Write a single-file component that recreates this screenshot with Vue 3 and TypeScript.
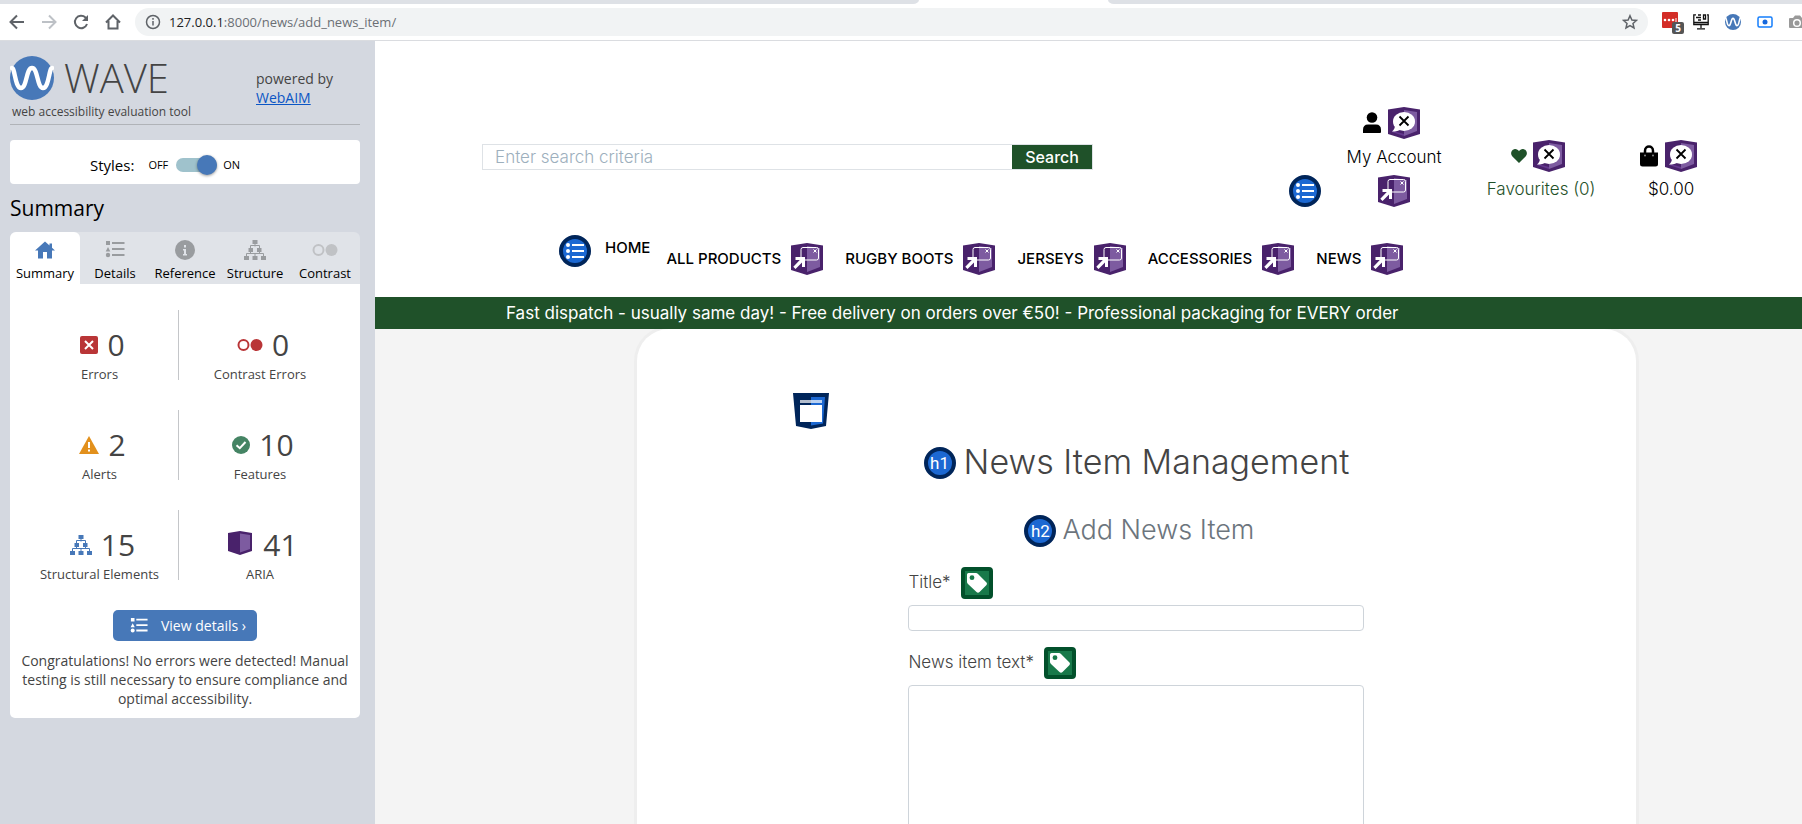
<script setup lang="ts">
import { ref } from 'vue'

interface Tab { id: string; label: string; icon: string; w: number; h: number }
interface Stat { label: string; count: number; icon: string; w: number; h: number; cls: string }

const tabs: Tab[] = [
  { id: 'summary', label: 'Summary', icon: 'i-house', w: 20, h: 20 },
  { id: 'details', label: 'Details', icon: 'i-list', w: 20, h: 20 },
  { id: 'reference', label: 'Reference', icon: 'i-info', w: 20, h: 20 },
  { id: 'structure', label: 'Structure', icon: 'i-tree', w: 22, h: 20 },
  { id: 'contrast', label: 'Contrast', icon: 'i-contrast', w: 26, h: 20 },
]
const activeTab = ref('summary')

const rows: Stat[][] = [
  [
    { label: 'Errors', count: 0, icon: 'i-error', w: 18, h: 18, cls: 'red' },
    { label: 'Contrast Errors', count: 0, icon: 'i-contrast', w: 26, h: 20, cls: 'red' },
  ],
  [
    { label: 'Alerts', count: 2, icon: 'i-alert', w: 20, h: 18, cls: 'amber' },
    { label: 'Features', count: 10, icon: 'i-check', w: 18, h: 18, cls: 'green' },
  ],
  [
    { label: 'Structural Elements', count: 15, icon: 'i-tree', w: 22, h: 20, cls: 'blue' },
    { label: 'ARIA', count: 41, icon: 'i-aria', w: 24, h: 24, cls: 'aria' },
  ],
]

const menus: string[] = ['ALL PRODUCTS', 'RUGBY BOOTS', 'JERSEYS', 'ACCESSORIES', 'NEWS']
const stylesOn = ref(true)
const query = ref('')
const title = ref('')
const body = ref('')
</script>

<template>
  <div class="browser">
    <svg class="defs" aria-hidden="true">
      <symbol id="i-logo" viewBox="0 0 44 44">
        <circle cx="22" cy="22" r="22" fill="#4778b8" />
        <path d="M2 12C5 12 5 32 11 32C17 32 16 12 22 12C28 12 27 32 33 32C39 32 39 12 42 12" fill="none" stroke="#fff" stroke-width="4.4" stroke-linecap="round" />
      </symbol>
      <symbol id="i-house" viewBox="0 0 20 20"><path fill="currentColor" d="M10 1.5L0 10.5H3V18.5H8V12H12V18.5H17V10.5H20L17 7.8V3.5H14.5V5.5Z" /></symbol>
      <symbol id="i-list" viewBox="0 0 20 20">
        <path fill="currentColor" d="M1 1H5V5H1ZM3 7L5.3 11.5H.7ZM7 2H19.5V4H7ZM7 8H19.5V10H7ZM7 14H19.5V16H7Z" /><circle cx="3" cy="15" r="2.2" fill="currentColor" />
      </symbol>
      <symbol id="i-info" viewBox="0 0 20 20"><circle cx="10" cy="10" r="10" fill="currentColor" /><path fill="#e0e3e8" d="M9 5H11V7.4H9ZM8 9H11V14H12V15.500H8V14H9V10.500H8Z" /></symbol>
      <symbol id="i-tree" viewBox="0 0 22 20">
        <path fill="currentColor" d="M8.5 0H13.5V4H8.5ZM4.500 8H9V12H4.500ZM13 8H17.500V12H13ZM0 16H5V20H0ZM8.500 16H13.500V20H8.500ZM17 16H22V20H17Z" />
        <path fill="none" stroke="currentColor" d="M11 4V6.500M6.500 8.500V5.500H15.500V8.500M2.500 16V13.500H19.500V16M11 16V13.500M6.500 12V13.500M15.500 12V13.500" />
      </symbol>
      <symbol id="i-contrast" viewBox="0 0 26 20"><circle cx="6.500" cy="10" r="5" fill="none" stroke="currentColor" stroke-width="2" /><circle cx="19.500" cy="10" r="6" fill="currentColor" /></symbol>
      <symbol id="i-error" viewBox="0 0 18 18"><rect width="18" height="18" rx="2" fill="currentColor" /><path d="M5 5L13 13M13 5L5 13" stroke="#fff" stroke-width="2" /></symbol>
      <symbol id="i-alert" viewBox="0 0 20 18"><path fill="currentColor" d="M10 0L20 18H0Z" /><path fill="#fff" d="M9 6H11V12H9ZM9 13.500H11V15.500H9Z" /></symbol>
      <symbol id="i-check" viewBox="0 0 18 18"><circle cx="9" cy="9" r="9" fill="currentColor" /><path d="M4.500 9.200L7.800 12.200L13.500 6" fill="none" stroke="#fff" stroke-width="2" /></symbol>
      <symbol id="i-aria" viewBox="0 0 24 24">
        <path fill="#49226b" d="M0 2L12 0L24 2V20L12 24L0 20Z" /><path fill="#7d5ba0" d="M12 2.500L22 4V18L12 21.500Z" />
      </symbol>
      <symbol id="b-hidden" viewBox="0 0 32 32">
        <path fill="#49226b" d="M0 2.500L16 0L32 2.500V27L16 32L0 27Z" /><path fill="#7d5ba0" d="M16 3L29 5V24L16 29Z" />
        <path fill="#65388f" d="M5 24L16 27V29L4 25Z" />
        <ellipse cx="16" cy="14.500" rx="11" ry="9.500" fill="#fff" /><path fill="#fff" d="M7 18C7 21 6 23 4 24.500C8 24.500 11 24 13 22Z" />
        <path d="M11.500 9.500L20.500 18.500M20.500 9.500L11.500 18.500" stroke="#000" stroke-width="1.800" />
      </symbol>
      <symbol id="b-popup" viewBox="0 0 32 32">
        <path fill="#49226b" d="M0 2.500L16 0L32 2.500V27L16 32L0 27Z" /><path fill="#7d5ba0" d="M16 3L29 5V24L16 29Z" />
        <rect x="10" y="4.500" width="17.500" height="12.500" rx="2" fill="none" stroke="#fff" stroke-width="1" />
        <path d="M22.500 6.500L25.500 9.500M25.500 6.500L22.500 9.500" stroke="#fff" />
        <path fill="#fff" d="M4.500 14H14V24H11V19.500L4.500 26L2.300 23.800L8.800 17H4.500Z" />
      </symbol>
      <symbol id="b-list" viewBox="0 0 32 32">
        <circle cx="16" cy="16" r="14" fill="#1c68d2" stroke="#00255a" stroke-width="4" />
        <g fill="#fff"><circle cx="9" cy="10" r="2" /><circle cx="9" cy="16" r="2" /><circle cx="9" cy="22" r="2" /><path d="M13 9H25V11H13ZM13 15H25V17H13ZM13 21H25V23H13Z" /></g>
      </symbol>
      <symbol id="b-region" viewBox="0 0 36 36">
        <path fill="#00255a" d="M0 0H36L33 33L18 36L3 33Z" /><path fill="#1c68d2" d="M18 4H32L30 30.500L18 32.500Z" />
        <path fill="#b3bdcd" d="M7 7H18V10H7Z" /><path fill="#bad1f1" d="M18 7H29V10H18Z" /><path fill="#fff" d="M7 12H29V29H7Z" />
      </symbol>
      <symbol id="b-label" viewBox="0 0 32 32">
        <rect x="2" y="2" width="28" height="28" rx="2" fill="#18794a" stroke="#02502b" stroke-width="4" />
        <path fill="#fff" d="M7.500 6H15Q16 6 17 7L25.500 15.500Q26.500 16.800 25.500 18L18.500 25Q17 26.500 15.500 25L7 17Q6 16 6 15V7.500Q6 6 7.500 6Z" /><circle cx="11" cy="10.700" r="2.400" fill="#18794a" />
      </symbol>
    </svg>

    <header class="chrome">
      <div class="strip"><div class="strip-side left"></div><div class="strip-side right"></div></div>
      <div class="toolbar">
        <div class="nav-buttons">
          <button aria-label="Back"><svg width="16" height="16" viewBox="0 0 16 16"><path d="M15 8H2M8 1.500L1.500 8L8 14.500" /></svg></button>
          <button aria-label="Forward" class="dim"><svg width="16" height="16" viewBox="0 0 16 16"><path d="M1 8H14M8 1.500L14.500 8L8 14.500" /></svg></button>
          <button aria-label="Reload"><svg width="16" height="16" viewBox="0 0 16 16"><path d="M14 10A6.200 6.200 0 1 1 12.500 3.500L14 5" /><path class="solid" d="M15 1V7H9Z" /></svg></button>
          <button aria-label="Home"><svg width="16" height="16" viewBox="0 0 16 16"><path d="M1 8.500L8 1.500L15 8.500M3.500 7V14.500H12.500V7" /></svg></button>
        </div>
        <div class="address">
          <svg width="16" height="16" viewBox="0 0 16 16" class="line"><circle cx="8" cy="8" r="6.500" /><path d="M8 7V11.500M8 4V5.700" /></svg>
          <span class="url"><span class="host">127.0.0.1</span>:8000/news/add_news_item/</span>
          <button aria-label="Bookmark"><svg width="16" height="16" viewBox="0 0 16 16"><path class="thin" d="M8 1.700L9.900 6L14.500 6.400L11 9.500L12 14L8 11.600L4 14L5 9.500L1.500 6.400L6.100 6Z" /></svg></button>
        </div>
        <div class="extensions">
          <svg width="24" height="24" viewBox="0 0 24 24">
            <rect x="1" y="2" width="16" height="16" rx="1" fill="#d32d27" /><g fill="#fff"><circle cx="4" cy="10" r="1.300" /><circle cx="8" cy="10" r="1.300" /><circle cx="12" cy="10" r="1.300" /><rect x="14.500" y="8" width="1" height="4" /></g>
            <rect x="11" y="12" width="12" height="12" rx="2" fill="#555" /><text x="17" y="22" class="count">5</text>
          </svg>
          <svg width="16" height="16" viewBox="0 0 16 16" class="monitor"><path d="M3 .8H.8V10.500H15.200V.8H14M1 8.500H15M8 10.500V14M4 14.800H12M5 1H8M3 3.500H8M5 6H8M10.500 1V5H12.500V1Z" /></svg>
          <svg width="16" height="16"><use href="#i-logo" /></svg>
          <svg width="16" height="16" viewBox="0 0 16 16"><rect x="1" y="3" width="14" height="10" rx="1.500" fill="#fff" stroke="#157efb" stroke-width="1.500" /><circle cx="8" cy="8" r="2.500" fill="#1768dc" /></svg>
          <svg width="16" height="16" viewBox="0 0 16 16"><path fill="#999" d="M1 4H4L6 1.500H11L13 4H16V14H1Q0 14 0 13V5Q0 4 1 4Z" /><circle cx="8" cy="9" r="3.300" fill="#999" stroke="#fff" stroke-width="1.500" /></svg>
        </div>
      </div>
    </header>

    <div class="workspace">
      <aside class="wave">
        <div class="brand">
          <div class="brand-main">
            <div class="brand-name"><svg width="44" height="44"><use href="#i-logo" /></svg><span>WAVE</span></div>
            <p>web accessibility evaluation tool</p>
          </div>
          <div class="powered">powered by<br /><a href="#">WebAIM</a></div>
        </div>

        <div class="styles-box">
          <label for="styles" class="styles-label">Styles:</label>
          <span>OFF</span><input id="styles" v-model="stylesOn" type="checkbox" class="switch" /><span>ON</span>
        </div>

        <h2>Summary</h2>
        <div class="tabs">
          <button v-for="t in tabs" :key="t.id" :class="['tab', t.id, { active: activeTab === t.id }]" @click="activeTab = t.id">
            <svg :width="t.w" :height="t.h"><use :href="'#' + t.icon" /></svg>{{ t.label }}
          </button>
        </div>
        <section class="panel">
          <div v-for="(row, i) in rows" :key="i" class="stat-row">
            <div v-for="s in row" :key="s.label" class="stat">
              <div class="figure"><svg :class="s.cls" :width="s.w" :height="s.h"><use :href="'#' + s.icon" /></svg>{{ s.count }}</div>
              <div class="caption">{{ s.label }}</div>
            </div>
          </div>
          <button class="view"><svg width="20" height="18"><use href="#i-list" /></svg>View details ›</button>
          <p class="message">Congratulations! No errors were detected! Manual testing is still necessary to ensure compliance and optimal accessibility.</p>
        </section>
      </aside>

      <main class="page">
        <div class="shop-head">
          <div class="shop-top">
            <form class="search" @submit.prevent>
              <input v-model="query" type="text" aria-label="Search" placeholder="Enter search criteria" />
              <button>Search</button>
            </form>
            <div class="account">
              <svg class="badge list-badge"><use href="#b-list" /></svg>
              <div class="acct user">
                <a href="#">
                  <span class="icons"><svg width="20" height="22" viewBox="0 0 20 22"><circle cx="10" cy="5.500" r="5.300" /><path d="M1 21V18Q1 12.500 6 12.500H14Q19 12.500 19 18V20Q19 21 18 21Z" /></svg><svg class="badge"><use href="#b-hidden" /></svg></span>
                  <span class="acct-label">My Account</span>
                </a>
                <svg class="badge"><use href="#b-popup" /></svg>
              </div>
              <a href="#" class="acct fav">
                <span class="icons"><svg width="16" height="16" viewBox="0 0 16 16"><path d="M8 15L1.200 8.200C-1 5.500 .3 2 3.200 1.200C5.300 .7 7 1.800 8 3.300C9 1.800 10.700 .7 12.800 1.200C15.700 2 17 5.500 14.800 8.200Z" /></svg><svg class="badge"><use href="#b-hidden" /></svg></span>
                <span class="acct-label">Favourites (0)</span>
              </a>
              <a href="#" class="acct bag">
                <span class="icons"><svg width="20" height="22" viewBox="0 0 20 22"><path d="M1 7.500H19V19Q19 21.500 16.500 21.500H3.500Q1 21.500 1 19Z" /><path d="M6 11V6C6 0 14 0 14 6V11" fill="none" stroke="#000" stroke-width="2.500" /><circle cx="6" cy="10.500" r="1" fill="#888" /><circle cx="14" cy="10.500" r="1" fill="#888" /></svg><svg class="badge"><use href="#b-hidden" /></svg></span>
                <span class="acct-label">$0.00</span>
              </a>
            </div>
          </div>
          <nav>
            <svg class="badge"><use href="#b-list" /></svg>
            <a href="#" class="home">HOME</a>
            <div class="menus">
              <a v-for="m in menus" :key="m" href="#">{{ m }}<svg class="badge"><use href="#b-popup" /></svg></a>
            </div>
          </nav>
        </div>
        <div class="banner">Fast dispatch - usually same day! - Free delivery on orders over €50! - Professional packaging for EVERY order</div>

        <div class="card">
          <svg class="region"><use href="#b-region" /></svg>
          <h1><span class="hbadge">h1</span>News Item Management</h1>
          <h2><span class="hbadge">h2</span>Add News Item</h2>
          <form class="fields" @submit.prevent>
            <div class="field-head"><label for="title">Title*</label><svg class="badge"><use href="#b-label" /></svg></div>
            <input id="title" v-model="title" type="text" />
            <div class="field-head"><label for="body">News item text*</label><svg class="badge"><use href="#b-label" /></svg></div>
            <textarea id="body" v-model="body" rows="10"></textarea>
          </form>
        </div>
      </main>
    </div>
  </div>
</template>

<style>
body { margin: 0; }
</style>

<style scoped>
* { box-sizing: border-box; }
button, input, textarea { font: inherit; color: inherit; margin: 0; }
button { border: 0; background: none; padding: 0; cursor: pointer; }
svg { display: block; flex: none; }
h1, h2, p { margin: 0; font-weight: 400; }
.defs { position: absolute; width: 0; height: 0; }
.browser { height: 100vh; display: flex; flex-direction: column; overflow: hidden; font-family: "Open Sans", sans-serif; }

.chrome { flex: none; background: #fff; border-bottom: 1px solid #dadce0; }
.strip { height: 4px; display: flex; justify-content: space-between; }
.strip-side { background: #dee1e6; }
.strip-side.left { width: 51%; border-bottom-right-radius: 6px 4px; }
.strip-side.right { width: 38.500%; border-bottom-left-radius: 6px 4px; }
.toolbar { height: 36px; display: flex; align-items: center; }
.nav-buttons { display: flex; gap: 16px; padding: 0 14px 0 9px; }
.toolbar svg { fill: none; stroke: none; }
.toolbar button path, .line circle, .line path { stroke: #5f6368; stroke-width: 2; fill: none; }
.toolbar button.dim path { stroke: #bdc1c6; }
.toolbar .line circle, .toolbar .line path { stroke-width: 1.500; }
.toolbar button .solid { fill: #5f6368; stroke: none; }
.toolbar button .thin { stroke-width: 1.500; }
.address { flex: 1; height: 28px; border-radius: 14px; background: #f1f3f4; display: flex; align-items: center; padding: 0 10px; color: #6b6f74; font-size: 13px; }
.url { flex: 1; margin-left: 8px; }
.host { color: #202124; }
.extensions { display: flex; align-items: center; gap: 16px; padding-left: 13px; margin-right: -3px; }
.extensions svg:first-child { margin-right: -8px; }
.count { fill: #fff; font-size: 10px; font-weight: 700; text-anchor: middle; }
.monitor path { stroke: #111; stroke-width: 1.300; }

.workspace { flex: 1; display: flex; min-height: 0; }
.wave { flex: none; width: 375px; background: #d4d8e0; padding: 15px 15px 0 10px; color: #444; }
.brand { display: flex; border-bottom: 1px solid #b0b3b8; height: 69px; }
.brand-main { width: 246px; }
.brand-name { display: flex; align-items: center; gap: 10px; height: 44px; font-size: 40px; font-weight: 300; line-height: 44px; }
.brand-main p { font-size: 12px; line-height: 24px; padding-left: 2px; }
.powered { padding-top: 13px; font-size: 14px; line-height: 19px; }
.powered a { color: #0b56c5; }
.styles-box { margin-top: 15px; height: 44px; border-radius: 4px; background: #fff; color: #000; display: flex; align-items: center; padding: 5px 0 0 80px; font-size: 11px; }
.styles-label { font-size: 15px; margin-right: 14px; }
.switch { appearance: none; width: 41px; height: 14px; border-radius: 7px; margin: 0 6px 0 8px; background: #9fc2cc; display: flex; align-items: center; }
.switch::before { content: ""; width: 20px; height: 20px; border-radius: 50%; background: #4778b8; box-shadow: 0 1px 3px #0006; flex: none; }
.switch:checked::before { margin-left: auto; }
.wave h2 { font-size: 21px; line-height: 48px; color: #000; }
.tabs { display: flex; background: #e0e3e8; border-radius: 6px 6px 0 0; }
.tab { flex: 1; min-width: 0; height: 52px; display: flex; flex-direction: column; align-items: center; gap: 4px; padding-top: 8px; font-size: 13px; line-height: 18px; color: #000; border-radius: 6px 6px 0 0; }
.tab.active { background: #fff; }
.tab svg { color: #999c9f; }
.tab.active svg { color: #4778b8; }
.tab.contrast svg { color: #c0c2c5; }
.panel { background: #fff; border-radius: 0 0 5px 5px; padding: 26px 10px 10px; display: flex; flex-direction: column; align-items: center; }
.stat-row { display: flex; align-self: stretch; justify-content: center; height: 70px; margin: 0 8px 30px 0; }
.stat { width: 158px; padding-top: 19px; text-align: center; }
.stat:first-child { border-right: 1px solid #c4c6c9; }
.stat:last-child { width: 162px; }
.figure { display: flex; justify-content: center; align-items: center; gap: 9px; height: 32px; padding-left: 6px; font-size: 30px; line-height: 32px; }
.caption { font-size: 13px; line-height: 26px; }
.red { color: #b93537; } .amber { color: #e2901c; } .green { color: #458464; } .blue { color: #4778b8; } .aria { margin: 0 2px 4px 0; }
.view { height: 31px; padding: 0 11px 0 16px; border-radius: 5px; background: #4778b8; color: #fff; display: flex; align-items: center; gap: 12px; font-size: 14px; }
.message { padding-top: 10px; font-size: 14px; line-height: 19px; text-align: center; }

.page { flex: 1; min-width: 0; background: #f4f4f4; font-family: Inter, sans-serif; font-size: 17px; font-weight: 300; color: #000; }
.page a { color: inherit; text-decoration: none; }
.badge { width: 32px; height: 32px; }
.shop-head { background: #fff; height: 256px; padding-top: 66px; }
.shop-top { display: flex; justify-content: space-between; height: 100px; padding: 0 7% 0 7.500%; }
.search { width: 611px; height: 26px; margin-top: 37px; display: flex; border: 1px solid #dee2e6; }
.search input { flex: 1; min-width: 0; border: 0; outline: 0; padding: 0 12px; background: none; }
.search input::placeholder { color: #9dafbd; opacity: 1; }
.search button { width: 80px; background: #1f5129; color: #fff; font-size: 16px; font-weight: 500; }
.account { display: flex; }
.list-badge { margin-top: 68px; }
.acct { display: flex; flex-direction: column; align-items: center; }
.icons { display: flex; align-items: center; justify-content: center; gap: 6px; padding-right: 6px; }
.acct-label { display: block; line-height: 34px; }
.user { width: 110px; margin-left: 18px; }
.user .acct-label { line-height: 36px; }
.fav { width: 112px; margin: 33px 0 0 36px; }
.fav svg:first-child { fill: #1f5129; }
.page .fav { color: #1f5129; }
.bag { width: 62px; margin: 33px 0 0 43px; }
nav { display: flex; padding: 28px 0 0 184px; font-weight: 500; font-size: 15px; white-space: nowrap; }
.home { margin: 0 16px 0 14px; line-height: 26px; }
.menus { display: flex; gap: 22px; padding-top: 8px; }
.menus a { display: flex; align-items: center; gap: 10px; line-height: 28px; }
.banner { background: #1f5129; color: #fff; line-height: 32px; padding-left: 131px; font-weight: 400; white-space: nowrap; }
.card { width: 70%; margin-left: 262px; min-height: 600px; background: #fff; border-radius: 32px 32px 0 0; box-shadow: 0 0 0 3px #eee; clip-path: inset(0 -3px 0 -3px); padding-top: 64px; display: flex; flex-direction: column; align-items: center; }
.region { width: 36px; height: 36px; align-self: flex-start; margin-left: 156px; }
.card h1, .card h2 { display: flex; align-items: center; gap: 6px; padding-left: 6px; font-weight: 300; }
.card h1 { height: 64px; gap: 8px; padding-left: 0; font-size: 34px; color: #444; }
.card h2 { height: 72px; font-size: 27px; color: #6c757d; }
.hbadge { width: 32px; height: 32px; margin-top: 4px; border-radius: 50%; border: 4px solid #00255a; background: #1c68d2; color: #fff; font: 400 17px/24px Roboto, sans-serif; text-align: center; }
.fields { width: 456px; display: flex; flex-direction: column; color: #444; }
.field-head { display: flex; align-items: center; gap: 10px; height: 38px; padding-bottom: 6px; margin-top: 2px; }
.field-head label { padding-bottom: 2px; }
.fields input, .fields textarea { border: 1px solid #ced4da; border-radius: 4px; background: #fff; padding: 2px 8px; }
.fields input { height: 26px; margin-bottom: 14px; }
.fields textarea { height: 260px; resize: none; }
</style>
